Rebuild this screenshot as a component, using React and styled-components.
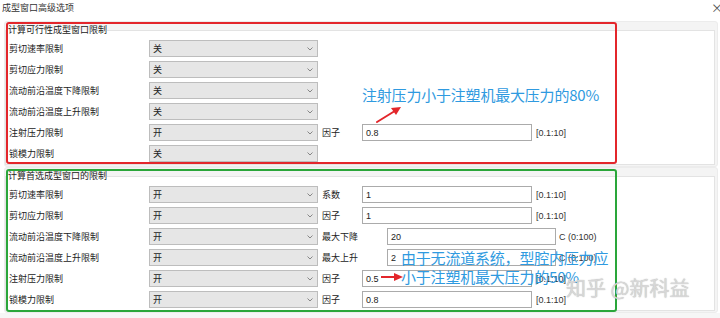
import React from "react";
import styled, { createGlobalStyle } from "styled-components";

const Global = createGlobalStyle`
  html, body { margin: 0; padding: 0; background: #fff; }
  body { font-family: "Noto Sans CJK SC", "Noto Sans", sans-serif; color: #222; }
`;

const Page = styled.div`
  position: relative;
  width: 720px;
  height: 318px;
  overflow: hidden;
  background: #fff;
  display: flex;
  flex-direction: column;
`;

const TitleBar = styled.div`
  height: 21px;
  box-sizing: border-box;
  padding: 1px 0 0 2px;
  display: flex;
  align-items: flex-start;
  justify-content: space-between;
  font-size: 9px;
  line-height: 14px;
  color: #333;
`;

const Close = styled.span`
  font-size: 12px;
  line-height: 14px;
  color: #555;
  margin-right: -3px;
`;

const Section = styled.div`
  margin: 0 2px 0 4px;
  background: #f4f4f4;
  border: 1px solid #ececec;
  border-radius: 3px;
  padding: 2px 2px 1px 0;
`;

const Group = styled.fieldset`
  margin: 0;
  padding: 0;
  border: 1px solid #e3e3e3;
  background: #fff;
  min-width: 0;
`;

const Legend = styled.legend`
  font-size: 9px;
  line-height: 12px;
  padding: 0;
  margin-left: 2px;
  color: #222;
`;

const Rows = styled.div`
  padding-top: 2px;
  display: flex;
  flex-direction: column;
`;

const Row = styled.div`
  height: 21px;
  display: grid;
  grid-template-columns: 143px 169px auto;
  align-items: center;
  font-size: 9px;
`;

const Label = styled.span`
  padding-left: 3px;
  white-space: nowrap;
`;

const Select = styled.div`
  height: 17px;
  box-sizing: border-box;
  background: #e6e6e6;
  border: 1px solid #bdbdbd;
  display: flex;
  align-items: center;
  justify-content: space-between;
  padding: 0 4px 0 3px;
  font-size: 9px;
`;

const Extra = styled.div`
  display: flex;
  align-items: center;
  margin-left: 4px;
  white-space: nowrap;
`;

const Unit = styled.span`
  width: ${(p) => (p.$wide ? 65 : 40)}px;
  flex: none;
`;

const Input = styled.div`
  width: ${(p) => (p.$wide ? 169 : 170)}px;
  height: 17px;
  box-sizing: border-box;
  border: 1px solid #ababab;
  background: #fff;
  display: flex;
  align-items: center;
  padding-left: 3px;
  font-family: "Liberation Sans", "Noto Sans CJK SC", sans-serif;
  font-size: 9px;
`;

const Range = styled.span`
  margin-left: ${(p) => (p.$wide ? 3 : 4)}px;
  font-family: "Liberation Sans", sans-serif;
  font-size: 9px;
  color: #333;
`;

const Footer = styled.div`
  flex: 1;
  background: #f6f6f6;
`;

const Frame = styled.div`
  position: absolute;
  left: ${(p) => p.$x}px;
  top: ${(p) => p.$y}px;
  width: ${(p) => p.$w}px;
  height: ${(p) => p.$h}px;
  box-sizing: border-box;
  border: 2px solid ${(p) => p.$color};
  border-radius: 3px;
  pointer-events: none;
`;

const Note = styled.div`
  position: absolute;
  left: ${(p) => p.$x}px;
  top: ${(p) => p.$y}px;
  color: #2f9ae0;
  font-size: 15px;
  line-height: 19px;
  white-space: nowrap;
  letter-spacing: -0.2px;
`;

const Arrow = styled.svg`
  position: absolute;
  left: 0;
  top: 0;
  pointer-events: none;
`;

const Watermark = styled.div`
  position: absolute;
  left: 566px;
  top: 276px;
  font-size: 20px;
  line-height: 24px;
  color: rgba(218, 218, 218, 0.95);
  text-shadow: 0 0 1px rgba(90, 90, 90, 0.5);
  white-space: nowrap;
`;

const Chevron = () => (
  <svg width="6" height="4" viewBox="0 0 6 4">
    <path d="M0.5 0.5 L3 3 L5.5 0.5" fill="none" stroke="#7a7a7a" strokeWidth="0.9" />
  </svg>
);

const feasible = [
  { label: "剪切速率限制", value: "关" },
  { label: "剪切应力限制", value: "关" },
  { label: "流动前沿温度下降限制", value: "关" },
  { label: "流动前沿温度上升限制", value: "关" },
  { label: "注射压力限制", value: "开", unit: "因子", input: "0.8", range: "[0.1:10]" },
  { label: "锁模力限制", value: "关" },
];

const preferred = [
  { label: "剪切速率限制", value: "开", unit: "系数", input: "1", range: "[0.1:10]" },
  { label: "剪切应力限制", value: "开", unit: "因子", input: "1", range: "[0.1:10]" },
  { label: "流动前沿温度下降限制", value: "开", unit: "最大下降", input: "20", range: "C (0:100)", wide: true },
  { label: "流动前沿温度上升限制", value: "开", unit: "最大上升", input: "2", range: "C (0:100)", wide: true },
  { label: "注射压力限制", value: "开", unit: "因子", input: "0.5", range: "[0.1:10]" },
  { label: "锁模力限制", value: "开", unit: "因子", input: "0.8", range: "[0.1:10]" },
];

const OptionRow = ({ row }) => (
  <Row>
    <Label>{row.label}</Label>
    <Select>
      <span>{row.value}</span>
      <Chevron />
    </Select>
    {row.unit && (
      <Extra>
        <Unit $wide={row.wide}>{row.unit}</Unit>
        <Input $wide={row.wide}>{row.input}</Input>
        <Range $wide={row.wide}>{row.range}</Range>
      </Extra>
    )}
  </Row>
);

const LimitGroup = ({ title, rows }) => (
  <Section>
    <Group>
      <Legend>{title}</Legend>
      <Rows>
        {rows.map((r) => (
          <OptionRow key={r.label} row={r} />
        ))}
      </Rows>
    </Group>
  </Section>
);

export default function App() {
  return (
    <>
      <Global />
      <Page>
        <TitleBar>
          <span>成型窗口高级选项</span>
          <Close>×</Close>
        </TitleBar>
        <LimitGroup title="计算可行性成型窗口限制" rows={feasible} />
        <LimitGroup title="计算首选成型窗口的限制" rows={preferred} />
        <Footer />

        <Frame $x={6} $y={22} $w={611} $h={142} $color="#e3262b" />
        <Frame $x={6} $y={169} $w={611} $h={143} $color="#2aa63a" />

        <Note $x={362} $y={85}>注射压力小于注塑机最大压力的80%</Note>
        <Note $x={401} $y={248}>
          由于无流道系统，型腔内压力应
          <br />
          小于注塑机最大压力的50%
        </Note>

        <Arrow width="720" height="318" viewBox="0 0 720 318">
          <path d="M377 122 L394 111.5" stroke="#e3262b" strokeWidth="2" strokeLinecap="round" />
          <path d="M401 107 L391 108 L396 115 Z" fill="#e3262b" />
          <path d="M381 277 L395 277" stroke="#e3262b" strokeWidth="2" />
          <path d="M403 277 L394 273 L394 281 Z" fill="#e3262b" />
        </Arrow>

        <Watermark>知乎 @新科益</Watermark>
      </Page>
    </>
  );
}
